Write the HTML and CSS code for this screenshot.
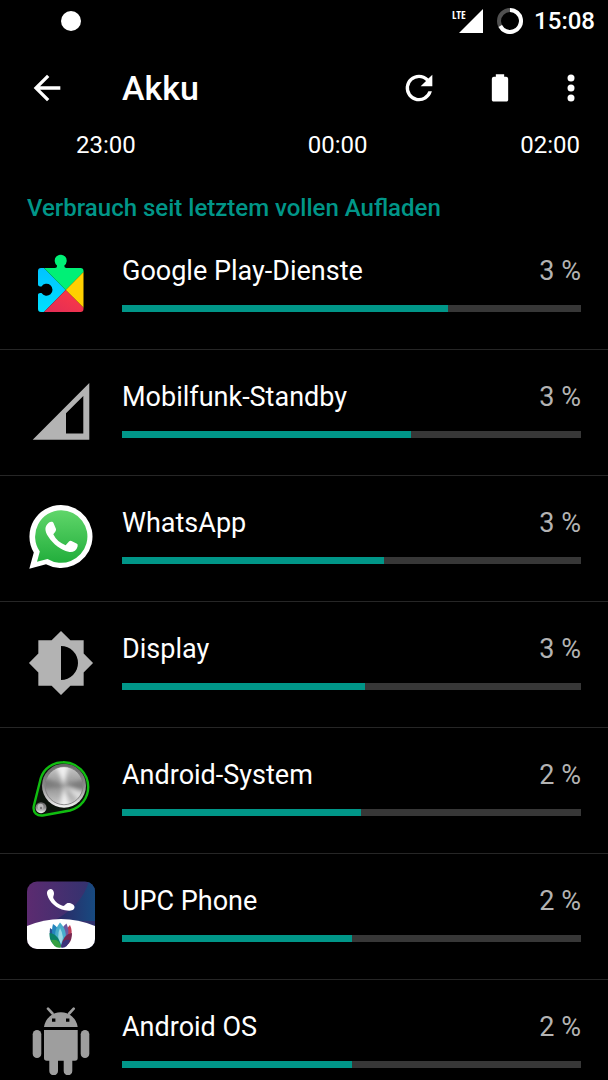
FILE: index.html
```html
<!DOCTYPE html>
<html lang="de">
<head>
<meta charset="utf-8">
<meta name="viewport" content="width=device-width, initial-scale=1">
<title>Akku</title>
<link rel="stylesheet" href="styles.css">
</head>
<body>
<div class="status-bar">
  <span class="status-dot"></span>
  <div class="status-signal">
    <span class="network">LTE</span>
    <svg class="signal" viewBox="0 0 24 24" aria-hidden="true"><path d="M0 24H24V0z" fill="#fff"/></svg>
  </div>
  <svg class="battery-ring" viewBox="0 0 26 26" aria-hidden="true">
    <circle cx="13" cy="13" r="11" fill="none" stroke="#505050" stroke-width="4"/>
    <path d="M13 2a11 11 0 1 1-9.8 16" fill="none" stroke="#fff" stroke-width="4"/>
  </svg>
  <time class="clock">15:08</time>
</div>

<header class="app-bar">
  <button class="icon-button" type="button" aria-label="Zurück">
    <svg viewBox="0 0 24 24"><path d="M20 11H7.83l5.59-5.59L12 4l-8 8 8 8 1.41-1.41L7.83 13H20z"/></svg>
  </button>
  <h1 class="title">Akku</h1>
  <button class="icon-button refresh" type="button" aria-label="Aktualisieren">
    <svg viewBox="0 0 24 24"><path d="M17.65 6.35A7.96 7.96 0 0 0 12 4a8 8 0 1 0 7.73 10h-2.08A6 6 0 1 1 12 6c1.66 0 3.14.69 4.22 1.78L13 11h7V4z"/></svg>
  </button>
  <button class="icon-button battery" type="button" aria-label="Akku">
    <svg viewBox="0 0 24 24"><path d="M15.7 5.3H14.5V3.7h-5v1.6H8.3a1.2 1.2 0 0 0-1.2 1.1v12.8c0 .5.5.9 1 .9h7.8c.5 0 1-.4 1-.9V6.4a1.2 1.2 0 0 0-1.2-1.1z"/></svg>
  </button>
  <button class="icon-button more" type="button" aria-label="Weitere Optionen">
    <svg viewBox="0 0 24 24"><circle cx="12" cy="6" r="2.1"/><circle cx="12" cy="12" r="2.1"/><circle cx="12" cy="18" r="2.1"/></svg>
  </button>
</header>

<main class="content">
  <div class="time-axis"><time>23:00</time><time>00:00</time><time>02:00</time></div>
  <h2 class="section-title">Verbrauch seit letztem vollen Aufladen</h2>
  <ul class="usage-list">
    <li class="usage">
      <svg class="app-icon" viewBox="0 0 68 68" aria-hidden="true">
        <defs>
          <linearGradient id="playBlue" x1="0" y1="0" x2="0" y2="1"><stop offset="0" stop-color="#00c3ff"/><stop offset="1" stop-color="#00e0ff"/></linearGradient>
          <linearGradient id="playRed" x1="1" y1="0" x2="0" y2="1"><stop offset="0" stop-color="#ff3a44"/><stop offset="1" stop-color="#e02c58"/></linearGradient>
          <clipPath id="puzzle"><path d="M14 17H28Q30.400 17 30 14.400A6 6 0 1 1 37.400 14.400Q37 17 39.400 17H53.500A3 3 0 0 1 56.500 20V58A3 3 0 0 1 53.500 61H14A3 3 0 0 1 11 58V43.500Q11 41.500 14.500 42A6 6 0 1 0 14.500 35.400Q11 36 11 33.500V20A3 3 0 0 1 14 17z"/></clipPath>
        </defs>
        <g clip-path="url(#puzzle)">
          <path d="M11 17H17L38.700 39 17 61H11z" fill="url(#playBlue)"/>
          <path d="M17 17V0H57V20.500L38.700 39z" fill="#00f076"/>
          <path d="M57 20.500V57.300L38.700 39z" fill="#ffd000"/>
          <path d="M38.700 39L57 57.300V62H16z" fill="url(#playRed)"/>
        </g>
      </svg>
      <div class="details">
        <div class="labels"><span class="name">Google Play-Dienste</span><span class="percent">3 %</span></div>
        <div class="track"><div class="fill" style="width:71%"></div></div>
      </div>
    </li>
    <li class="usage">
      <svg class="app-icon" viewBox="0 0 68 68" aria-hidden="true"><path d="M5.700 62.700H62.300V6zM39 56.500V36.300L56.300 19V56.500z" fill="#b3b3b3" fill-rule="evenodd"/></svg>
      <div class="details">
        <div class="labels"><span class="name">Mobilfunk-Standby</span><span class="percent">3 %</span></div>
        <div class="track"><div class="fill" style="width:63%"></div></div>
      </div>
    </li>
    <li class="usage">
      <svg class="app-icon" viewBox="0 0 68 68" aria-hidden="true">
        <defs><linearGradient id="chatGreen" x1="0" y1="0" x2="0" y2="1"><stop offset="0" stop-color="#60d66a"/><stop offset="1" stop-color="#22ae3c"/></linearGradient></defs>
        <path d="M34 2A31.500 31.500 0 1 1 19 61.200L2.300 65.700 6.800 49.500A31.500 31.500 0 0 1 34 2z" fill="#fff"/>
        <path d="M34.200 7.200A26.300 26.300 0 1 1 20.500 56L10 58.800 12.800 48.500A26.300 26.300 0 0 1 34.200 7.200z" fill="url(#chatGreen)"/>
        <path d="M22 19.500C23.500 18.500 26 18.500 26.500 20L29 26C29.500 27.500 27.500 30 26.300 31.200C29 36.500 33 40 38.600 42.200L42 38.400Q43 37.300 44.500 38L50 40.700Q51.200 41.400 50.500 43.800C49.500 48 45.500 49.700 41.500 48.800C34 47.200 26.500 41.500 21.200 33.500C17.500 28 17.300 23 22 19.500z" fill="#fff"/>
      </svg>
      <div class="details">
        <div class="labels"><span class="name">WhatsApp</span><span class="percent">3 %</span></div>
        <div class="track"><div class="fill" style="width:57%"></div></div>
      </div>
    </li>
    <li class="usage">
      <svg class="app-icon" viewBox="0 0 24 24" aria-hidden="true"><path d="M20 15.310L23.310 12 20 8.690V4h-4.690L12 .690 8.690 4H4v4.690L.690 12 4 15.310V20h4.690L12 23.310 15.310 20H20zM12 18V6a6 6 0 0 1 0 12z" fill="#b3b3b3" fill-rule="evenodd"/></svg>
      <div class="details">
        <div class="labels"><span class="name">Display</span><span class="percent">3 %</span></div>
        <div class="track"><div class="fill" style="width:53%"></div></div>
      </div>
    </li>
    <li class="usage">
      <svg class="app-icon" viewBox="0 0 68 68" aria-hidden="true">
        <defs>
          <linearGradient id="rim" x1="0" y1="0" x2="0" y2="1"><stop offset="0" stop-color="#666"/><stop offset=".5" stop-color="#8c8c8c"/><stop offset="1" stop-color="#f4f4f4"/></linearGradient>
          <linearGradient id="metal" x1="0" y1="0" x2="0" y2="1"><stop offset="0" stop-color="#c8c8c8"/><stop offset=".5" stop-color="#909090"/><stop offset="1" stop-color="#c8c8c8"/></linearGradient>
          <filter id="soften"><feGaussianBlur stdDeviation="2"/></filter>
          <clipPath id="face"><circle cx="37" cy="30.700" r="18.500"/></clipPath>
        </defs>
        <path d="M13.800 23C17 13 26 7.300 36 7.300A24.600 24.600 0 0 1 61.200 32C61.200 43 54 52.500 43 55.500L17 60.200C10 61.500 5.500 57.500 6.800 51z" fill="#0a120a" stroke="#10bd10" stroke-width="2.400"/>
        <circle cx="37" cy="30.700" r="22" fill="url(#rim)"/>
        <circle cx="37" cy="30.700" r="19" fill="url(#metal)" stroke="#777" stroke-width=".8"/>
        <g clip-path="url(#face)"><g filter="url(#soften)">
          <path d="M37 30.700L28 8 42 8zM37 30.700L32 55 44 55z" fill="#f0f0f0"/>
          <path d="M37 30.700L14 22 14 34zM37 30.700L60 24 60 36z" fill="#7c7c7c"/>
          <path d="M37 30.700L58 38 54 48z" fill="#dedede"/>
        </g></g>
        <circle cx="14" cy="52.700" r="5.500" fill="url(#rim)"/>
        <circle cx="13.500" cy="51.700" r="3" fill="#bbb"/><circle cx="14" cy="53" r="1.200" fill="#777"/>
      </svg>
      <div class="details">
        <div class="labels"><span class="name">Android-System</span><span class="percent">2 %</span></div>
        <div class="track"><div class="fill" style="width:52%"></div></div>
      </div>
    </li>
    <li class="usage">
      <svg class="app-icon" viewBox="0 0 68 68" aria-hidden="true">
        <defs>
          <linearGradient id="violet"><stop offset="0" stop-color="#5c2b70"/><stop offset="1" stop-color="#30336f"/></linearGradient>
          <linearGradient id="navy"><stop offset="0" stop-color="#302462"/><stop offset="1" stop-color="#174a80"/></linearGradient>
          <clipPath id="tile"><rect y="0.500" width="68" height="67.500" rx="10"/></clipPath>
        </defs>
        <g clip-path="url(#tile)">
          <rect width="68" height="68" fill="url(#violet)"/>
          <path d="M62 0Q55 25 26 40H68V0z" fill="url(#navy)"/>
          <path d="M0 45Q34 31 68 45V68H0z" fill="#fff"/>
        </g>
        <path d="M22 8.500C24 7 26.500 8.500 27 12C27.200 14.500 25.500 15.500 26.500 17.500C28.500 21 31.500 23.500 35.500 24.800C38 25.400 38.500 22.500 40.500 22C43.500 21.500 47.500 23.500 47.500 26C47.500 30 42 30.300 38 29.300C29.500 27.500 22.500 21.500 20.300 14C19.600 11.500 20 9.500 22 8.500z" fill="#fff"/>
        <path d="M23 47Q31 51 34 65Q21 62 23 47z" fill="#285492"/>
        <path d="M43 44Q49 57 34 65Q33 53 43 44z" fill="#bd3e59"/>
        <path d="M26 43Q35 48 34 65Q22 57 26 43z" fill="#2485bd"/>
        <path d="M39.500 42.500Q45 55 34 65Q29 51 39.500 42.500z" fill="#6c5aa0"/>
        <path d="M33 41.500Q44 53 34 65Q23 54 33 41.500z" fill="#48adca"/>
        <path d="M33 47Q38 56 34 63Q29 56 33 47z" fill="#9bd9e4"/>
        <path d="M22.500 52Q32 53 34 66Q22 65 22.500 52z" fill="#0b8067"/>
        <path d="M45 52Q36 53 34 66Q45 65 45 52z" fill="#74264f"/>
        <path d="M24 59Q33 57 34 66.500Q27 68 24 59z" fill="#36a142"/>
        <path d="M43 59Q35 57 34 66.500Q40 68 43 59z" fill="#3b347b"/>
      </svg>
      <div class="details">
        <div class="labels"><span class="name">UPC Phone</span><span class="percent">2 %</span></div>
        <div class="track"><div class="fill" style="width:50%"></div></div>
      </div>
    </li>
    <li class="usage">
      <svg class="app-icon" viewBox="0 0 68 68" aria-hidden="true">
        <g fill="#9e9e9e">
          <path d="M17 20A17 17 0 0 1 50.700 20zM25 11.400V14.800H28.400V11.400zM39 11.400V14.800H42.400V11.400z" fill-rule="evenodd"/>
          <path d="M17 23H50.700V51A2.700 2.700 0 0 1 48 53.700H45.300V64A4.300 4.300 0 0 1 36.700 64V53.700H31V64A4.300 4.300 0 0 1 22.300 64V53.700H19.700A2.700 2.700 0 0 1 17 51z"/>
          <rect x="5.700" y="23" width="8.600" height="28" rx="4.300"/><rect x="53.700" y="23" width="8.600" height="28" rx="4.300"/>
        </g>
        <path d="M21 1.700L25.500 6.500M46.700 1.700L42.200 6.500" stroke="#9e9e9e" stroke-width="2.600" stroke-linecap="round"/>
      </svg>
      <div class="details">
        <div class="labels"><span class="name">Android OS</span><span class="percent">2 %</span></div>
        <div class="track"><div class="fill" style="width:50%"></div></div>
      </div>
    </li>
  </ul>
</main>
</body>
</html>
```
FILE: styles.css
```css
* {
  box-sizing: border-box;
}

body {
  margin: 0;
  height: 100vh;
  display: flex;
  flex-direction: column;
  overflow: hidden;
  background: #000;
  color: #fff;
  font-family: Roboto, "Noto Sans", sans-serif;
  font-size: 24px;
}

.status-bar {
  flex: none;
  display: flex;
  align-items: center;
  height: 41px;
  padding: 0 13px 0 61px;
}

.status-dot {
  width: 20px;
  height: 20px;
  margin-right: auto;
  border-radius: 50%;
  background: #fff;
}

.status-signal {
  display: flex;
  position: relative;
  padding-left: 7px;
}

.network {
  position: absolute;
  left: 0;
  top: -1px;
  font-family: "Open Sans Condensed", "Roboto Condensed", "Liberation Sans Narrow", Roboto, sans-serif;
  font-size: 11px;
  font-weight: 700;
  line-height: 14px;
}

.signal {
  width: 24px;
  height: 24px;
}

.battery-ring {
  width: 26px;
  height: 26px;
  margin: 0 11px 0 14px;
}

.clock {
  font-weight: 500;
  line-height: 28px;
}

.app-bar {
  flex: none;
  display: flex;
  align-items: center;
  height: 94px;
  margin-bottom: -4px;
  padding: 0 17px 0 27px;
}

.icon-button {
  flex: none;
  width: 40px;
  height: 40px;
  padding: 0;
  border: 0;
  background: none;
}

.icon-button svg {
  display: block;
  width: 40px;
  height: 40px;
  fill: #fff;
}

.title {
  flex: 1;
  margin: 0 0 0 55px;
  font-size: 34px;
  font-weight: 500;
  line-height: 40px;
}

.battery {
  margin-left: 41px;
}

.more {
  margin-left: 31px;
}

.content {
  flex: 1;
  min-height: 0;
  overflow-y: auto;
  scrollbar-width: none;
}

.time-axis {
  display: grid;
  grid-template-columns: 12fr 11fr auto;
  padding: 0 28px 0 76px;
  line-height: 28px;
}

.section-title {
  margin: 34px 27px 0;
  color: #009688;
  font-size: 24px;
  font-weight: 500;
  line-height: 31px;
}

.usage-list {
  margin: 0;
  padding: 0;
  list-style: none;
}

.usage {
  display: flex;
  gap: 27px;
  padding: 27px 27px 37px;
  border-bottom: 1px solid #262626;
}

.app-icon {
  flex: none;
  width: 68px;
  height: 68px;
  margin-bottom: -7px;
}

.details {
  flex: 1;
  padding-top: 4px;
}

.labels {
  display: flex;
  justify-content: space-between;
  font-size: 27px;
  line-height: 32px;
}

.percent {
  color: #b3b3b3;
}

.track {
  height: 7px;
  margin-top: 18px;
  background: #373737;
}

.fill {
  height: 100%;
  background: #009688;
}
```
